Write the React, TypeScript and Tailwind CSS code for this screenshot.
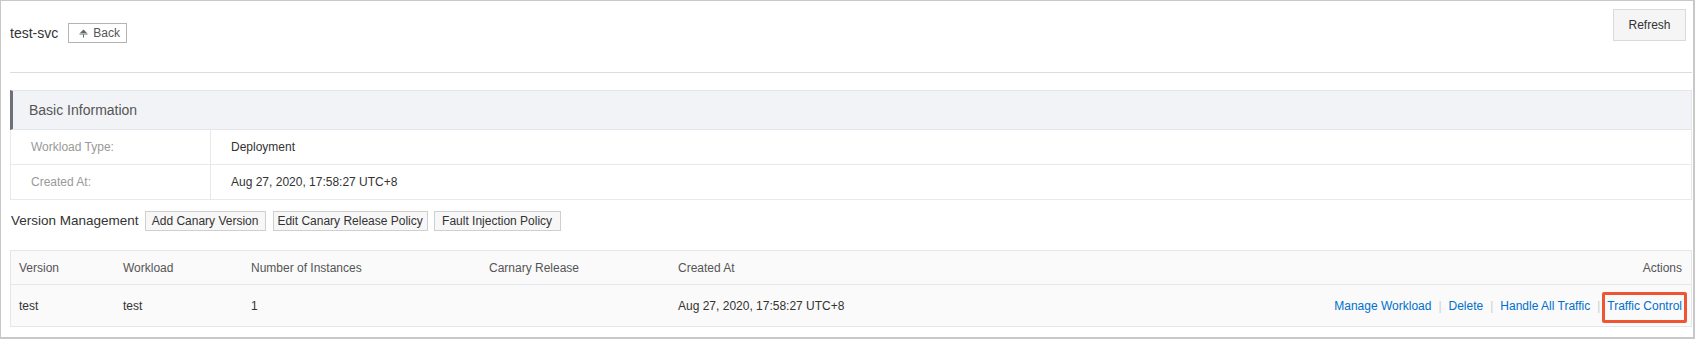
import React from 'react';

export default function App() {
  const versions = [
    {
      version: 'test',
      workload: 'test',
      instances: '1',
      canary: '',
      createdAt: 'Aug 27, 2020, 17:58:27 UTC+8',
    },
  ];

  const actions = ['Manage Workload', 'Delete', 'Handle All Traffic', 'Traffic Control'];

  return (
    <div className="w-[1695px] h-[339px] bg-white border-l border-t border-r-2 border-b-2 border-[#c8c8c8] pl-[9px] pr-px pt-[8px] font-['Liberation_Sans',Arial,sans-serif] text-[12px] text-[#333]">
      {/* page header */}
      <div className="h-[64px] border-b border-[#dcdcdc] flex justify-between items-start">
        <div className="flex items-center h-[20px] mt-[14px]">
          <span className="text-[14px] leading-[20px] text-[#333]">test-svc</span>
          <button className="ml-[10px] w-[59px] h-[20px] border border-[#b4b4b4] bg-white flex items-center pl-[10px] text-[12px] leading-[14px] text-[#555]">
            <svg width="9" height="9" viewBox="0 0 9 9" className="mr-[5px]">
              <path d="M4.5 0.5 L8 4 H1 Z" fill="#666" />
              <rect x="0.5" y="4.5" width="8" height="1" fill="#666" />
              <rect x="4" y="5.5" width="1" height="3" fill="#666" />
            </svg>
            Back
          </button>
        </div>
        <button className="w-[73px] h-[32px] mr-[6px] bg-[#f5f5f5] border border-[#dadada] text-[12px] text-[#333]">
          Refresh
        </button>
      </div>

      {/* basic information */}
      <div className="mt-[17px]">
        <div className="h-[40px] flex items-center border-t border-r border-b border-[#e3e6eb] border-l-[3px] border-l-[#6f6f7c] bg-[#f2f3f7] pl-[16px] text-[14px] text-[#555]">
          Basic Information
        </div>
        <div className="flex h-[35px] border-x border-b border-[#e8e8e8]">
          <div className="w-[200px] border-r border-[#e8e8e8] flex items-center pl-[20px] text-[#999]">Workload Type:</div>
          <div className="flex items-center pl-[20px] text-[#333]">Deployment</div>
        </div>
        <div className="flex h-[35px] border-x border-b border-[#e8e8e8]">
          <div className="w-[200px] border-r border-[#e8e8e8] flex items-center pl-[20px] text-[#999]">Created At:</div>
          <div className="flex items-center pl-[20px] text-[#333]">Aug 27, 2020, 17:58:27 UTC+8</div>
        </div>
      </div>

      {/* version management toolbar */}
      <div className="mt-[11px] flex items-center h-[20px]">
        <span className="text-[13.5px] leading-[20px] text-[#333] pl-px">Version Management</span>
        <button className="ml-[6px] w-[121px] h-[20px] bg-[#f7f7f7] border border-[#cfcfcf] text-[12px] text-[#333]">Add Canary Version</button>
        <button className="ml-[7px] w-[155px] h-[20px] bg-[#f7f7f7] border border-[#cfcfcf] text-[12px] text-[#333]">Edit Canary Release Policy</button>
        <button className="ml-[6px] w-[127px] h-[20px] bg-[#f7f7f7] border border-[#cfcfcf] text-[12px] text-[#333]">Fault Injection Policy</button>
      </div>

      {/* versions table */}
      <div className="mt-[19px] border border-[#e3e6eb] bg-[#fafafa]">
        <div className="grid grid-cols-[104px_128px_238px_189px_1fr] h-[34px] border-b border-[#e3e6eb] items-center text-[#555] leading-[14px]">
          <div className="pl-[8px]">Version</div>
          <div className="pl-[8px]">Workload</div>
          <div className="pl-[8px]">Number of Instances</div>
          <div className="pl-[8px]">Carnary Release</div>
          <div className="flex justify-between pl-[8px] pr-[9px]">
            <span>Created At</span>
            <span>Actions</span>
          </div>
        </div>
        {versions.map((v, i) => (
          <div key={i} className="grid grid-cols-[104px_128px_238px_189px_1fr] h-[41px] items-center text-[#333] leading-[14px]">
            <div className="pl-[8px]">{v.version}</div>
            <div className="pl-[8px]">{v.workload}</div>
            <div className="pl-[8px]">{v.instances}</div>
            <div className="pl-[8px]">{v.canary}</div>
            <div className="flex justify-between pl-[8px] pr-[9px]">
              <span>{v.createdAt}</span>
              <span className="flex items-center">
                {actions.map((a, j) => (
                  <React.Fragment key={a}>
                    {j > 0 && <span className="mx-[7px] text-[#d0d0d0]">|</span>}
                    {a === 'Traffic Control' ? (
                      <span className="relative text-[#0070cc]">
                        {a}
                        <span className="absolute -left-[5px] -right-[5px] -top-[7px] -bottom-[10px] border-[3px] border-[#f05533] rounded-[2px]"></span>
                      </span>
                    ) : (
                      <span className="text-[#0070cc]">{a}</span>
                    )}
                  </React.Fragment>
                ))}
              </span>
            </div>
          </div>
        ))}
      </div>
    </div>
  );
}
